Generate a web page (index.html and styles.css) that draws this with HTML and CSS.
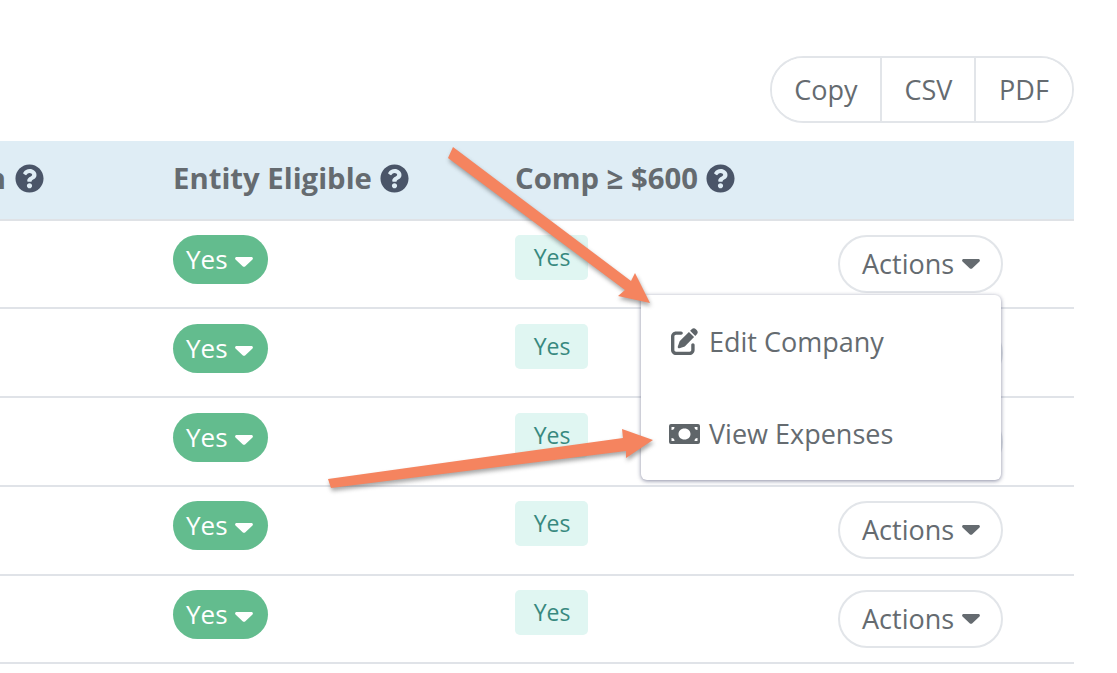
FILE: index.html
```html
<!DOCTYPE html>
<html lang="en">
<head>
<meta charset="utf-8">
<title>Companies</title>
<link rel="stylesheet" href="styles.css">
</head>
<body>
<svg class="defs" width="0" height="0" aria-hidden="true">
  <symbol id="q" viewBox="0 0 512 512"><path d="M504 256c0 136.997-111.043 248-248 248S8 392.997 8 256C8 119.083 119.043 8 256 8s248 111.083 248 248zM262.655 90c-54.497 0-89.255 22.957-116.549 63.758-3.536 5.286-2.353 12.415 2.715 16.258l34.699 26.31c5.205 3.947 12.621 3.008 16.665-2.122 17.864-22.658 30.113-35.797 57.303-35.797 20.429 0 45.698 13.148 45.698 32.958 0 14.976-12.363 22.667-32.534 33.976C247.128 238.528 216 254.941 216 296v4c0 6.627 5.373 12 12 12h56c6.627 0 12-5.373 12-12v-1.333c0-28.462 83.186-29.647 83.186-106.667 0-58.002-60.165-102-116.531-102zM256 338c-25.365 0-46 20.635-46 46 0 25.364 20.635 46 46 46s46-20.636 46-46c0-25.365-20.635-46-46-46z"/></symbol>
  <symbol id="caret" viewBox="0 0 18 10"><path d="M1.600 0h14.800c1.300 0 2 1.500 1.100 2.400L10.100 9.400c-.6.600-1.600.6-2.200 0L.5 2.400C-.4 1.500.3 0 1.600 0z"/></symbol>
</svg>
<main class="page">
  <div class="toolbar">
    <div class="btn-group">
      <button class="tool-btn tool-copy">Copy</button>
      <button class="tool-btn tool-csv">CSV</button>
      <button class="tool-btn tool-pdf">PDF</button>
    </div>
  </div>
  <div class="table">
    <div class="row head">
      <div class="cell c1"><span class="cut">n</span><svg class="q"><use href="#q"/></svg></div>
      <div class="cell c2">Entity Eligible<svg class="q"><use href="#q"/></svg></div>
      <div class="cell c3">Comp ≥ $600<svg class="q"><use href="#q"/></svg></div>
    </div>
    <div class="row body-row">
      <div class="c1"></div>
      <div class="c2"><span class="pill">Yes<svg class="caret"><use href="#caret"/></svg></span></div>
      <div class="c3"><span class="badge">Yes</span></div>
      <div class="c4"><button class="actions">Actions<svg class="caret"><use href="#caret"/></svg></button></div>
    </div>
    <div class="row body-row">
      <div class="c1"></div>
      <div class="c2"><span class="pill">Yes<svg class="caret"><use href="#caret"/></svg></span></div>
      <div class="c3"><span class="badge">Yes</span></div>
      <div class="c4"><button class="actions">Actions<svg class="caret"><use href="#caret"/></svg></button></div>
    </div>
    <div class="row body-row">
      <div class="c1"></div>
      <div class="c2"><span class="pill">Yes<svg class="caret"><use href="#caret"/></svg></span></div>
      <div class="c3"><span class="badge">Yes</span></div>
      <div class="c4"><button class="actions">Actions<svg class="caret"><use href="#caret"/></svg></button></div>
    </div>
    <div class="row body-row">
      <div class="c1"></div>
      <div class="c2"><span class="pill">Yes<svg class="caret"><use href="#caret"/></svg></span></div>
      <div class="c3"><span class="badge">Yes</span></div>
      <div class="c4"><button class="actions">Actions<svg class="caret"><use href="#caret"/></svg></button></div>
    </div>
    <div class="row body-row">
      <div class="c1"></div>
      <div class="c2"><span class="pill">Yes<svg class="caret"><use href="#caret"/></svg></span></div>
      <div class="c3"><span class="badge">Yes</span></div>
      <div class="c4"><button class="actions">Actions<svg class="caret"><use href="#caret"/></svg></button></div>
    </div>
  </div>
</main>
<div class="menu">
  <a class="menu-item item-edit">
    <svg class="menu-icon edit" viewBox="0 0 512 512"><path d="M471.600 21.700c-21.900-21.900-57.300-21.900-79.200 0L362.300 51.700l97.900 97.900 30.100-30.100c21.900-21.900 21.900-57.300 0-79.200L471.600 21.700zm-299.200 220c-6.100 6.100-10.800 13.600-13.500 21.900l-29.600 88.800c-2.900 8.600-.6 18.100 5.800 24.600s15.900 8.700 24.600 5.800l88.800-29.600c8.200-2.700 15.700-7.400 21.900-13.500L437.700 172.300 339.700 74.300 172.400 241.700zM96 64C43 64 0 107 0 160V416c0 53 43 96 96 96H352c53 0 96-43 96-96V320c0-17.700-14.300-32-32-32s-32 14.300-32 32v96c0 17.700-14.300 32-32 32H96c-17.700 0-32-14.300-32-32V160c0-17.700 14.300-32 32-32h96c17.700 0 32-14.300 32-32s-14.300-32-32-32H96z"/></svg>
    Edit Company
  </a>
  <a class="menu-item item-view">
    <svg class="menu-icon money" viewBox="0 0 31 20"><path fill-rule="evenodd" d="M2 0h27a2 2 0 0 1 2 2v16a2 2 0 0 1-2 2H2a2 2 0 0 1-2-2V2a2 2 0 0 1 2-2zM15.500 4.500c-3.800 0-6 2.500-6 5.500s2.200 5.500 6 5.500s6-2.500 6-5.500s-2.200-5.500-6-5.500zM2.500 3v3a3 3 0 0 0 3-3zM25.500 3a3 3 0 0 0 3 3v-3zM2.500 14v3h3a3 3 0 0 0-3-3zM28.500 14a3 3 0 0 0-3 3h3z"/></svg>
    View Expenses
  </a>
</div>
<svg class="arrows" viewBox="0 0 1117 673" aria-hidden="true">
  <polygon class="arrow" points="448,158 453,147 631,281 635,273 650,303 618,296 625,290"/>
  <polygon class="arrow" points="328,479 331,488 626,451 626,458 653,440 622,429 623,438"/>
</svg>
</body>
</html>
```

FILE: styles.css
```css
* { box-sizing: border-box; }
html, body { margin: 0; height: 100%; overflow: hidden; background: #fff; }
body {
  position: relative;
  font-family: "Open Sans", "Liberation Sans", sans-serif;
  color: #656b70;
}
.defs { position: absolute; }
.page { width: 1074px; padding-top: 56px; }
.toolbar { display: flex; justify-content: flex-end; height: 85px; }
.btn-group {
  display: flex;
  width: 304px;
  height: 67px;
  border: 2px solid #e2e5e9;
  border-radius: 34px;
  overflow: hidden;
}
.tool-btn {
  border: 0;
  background: #fff;
  padding: 0;
  font: 400 27px "Open Sans", sans-serif;
  color: #656b70;
  border-left: 2px solid #e2e5e9;
}
.tool-copy { width: 108px; border-left: 0; }
.tool-csv { width: 94px; padding-left: 1px; }
.tool-pdf { flex: 1; }
.table { display: flex; flex-direction: column; }
.row { display: grid; grid-template-columns: 173px 342px 1fr 236px; }
.head {
  height: 79.500px;
  background: #dfedf5;
  border-bottom: 2px solid #dfe2e6;
  font-size: 29.300px;
  font-weight: 700;
  align-items: center;
}
.cell { display: flex; align-items: center; padding-bottom: 3px; }
.head .c3 { grid-column: 3 / 5; }
.c1 { justify-content: flex-end; overflow: hidden; }
.c1.cell { padding-right: 129px; }
.cut { margin-left: -24px; margin-right: 9px; }
.q { width: 29px; height: 29px; margin-left: 8px; fill: #4a5568; flex: none; }
.c1 .q { margin-left: 0; }
.body-row { height: 88.750px; border-bottom: 2px solid #e0e3e8; padding-top: 14.500px; }
.pill {
  display: inline-flex;
  align-items: center;
  height: 49px;
  width: 95px;
  padding: 0 0 1px 13px;
  background: #63bc8e;
  color: #fff;
  border-radius: 25px;
  font-size: 26px;
}
.pill .caret { width: 18px; height: 10px; margin-left: 7px; margin-top: 6px; fill: #fff; }
.badge {
  display: inline-flex;
  justify-content: center;
  align-items: center;
  width: 73px;
  height: 45px;
  padding: 0 0 1px 1px;
  background: #e0f6f2;
  color: #38897f;
  border-radius: 5px;
  font-size: 23px;
}
.actions {
  display: inline-flex;
  align-items: center;
  width: 165px;
  height: 58px;
  padding: 0 0 1px 22px;
  border: 2px solid #e2e5e9;
  border-radius: 29px;
  background: #fff;
  font: 400 27px "Open Sans", sans-serif;
  color: #656b70;
}
.actions .caret { width: 18px; height: 10px; margin-left: 8px; margin-top: 1px; fill: #656b70; }
.menu {
  position: absolute;
  left: 641px;
  top: 295px;
  width: 360px;
  height: 185px;
  background: #fff;
  border-radius: 6px;
  box-shadow: 0 1px 4px rgba(70, 75, 110, .65);
  font-size: 27px;
}
.menu-item { display: flex; align-items: center; position: absolute; white-space: nowrap; }
.item-edit { top: 28px; left: 30px; }
.item-view { top: 120px; left: 28px; }
.menu-icon { fill: #5f6569; flex: none; }
.edit { width: 27px; height: 27px; margin-right: 11px; }
.money { width: 31px; height: 20px; margin-right: 9px; }
.arrows { position: absolute; left: 0; top: 0; width: 1117px; height: 673px; pointer-events: none; }
.arrow { fill: #f5845f; filter: drop-shadow(1px 3px 2px rgba(60, 60, 60, .45)); }
```
